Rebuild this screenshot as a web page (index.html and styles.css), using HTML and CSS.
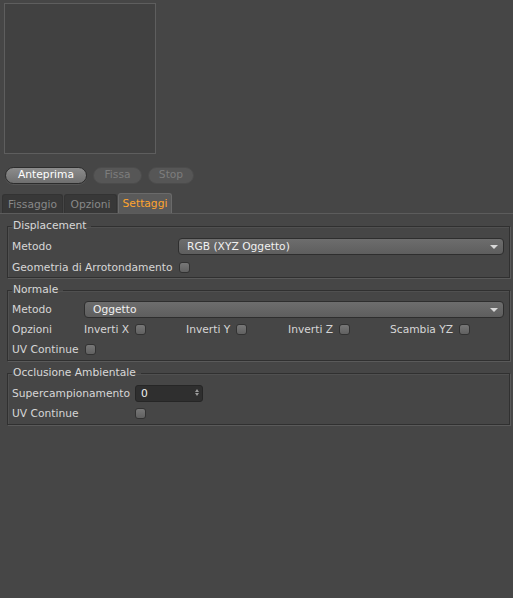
FILE: index.html
```html
<!DOCTYPE html>
<html>
<head>
<meta charset="utf-8">
<link rel="stylesheet" href="styles.css">
</head>
<body>
<div class="preview"></div>
<div class="buttons">
  <span class="btn btn-main">Anteprima</span>
  <span class="btn btn-off btn-fissa">Fissa</span>
  <span class="btn btn-off btn-stop">Stop</span>
</div>
<div class="tabs">
  <span class="tab tab-1">Fissaggio</span>
  <span class="tab tab-2">Opzioni</span>
  <span class="tab tab-3 active">Settaggi</span>
</div>
<div class="content">
  <fieldset class="group g1">
    <legend>Displacement</legend>
    <div class="row row-tall">
      <span class="label w1">Metodo</span>
      <span class="select">RGB (XYZ Oggetto)<i class="arrow"></i></span>
    </div>
    <div class="row">
      <span class="label">Geometria di Arrotondamento</span>
      <span class="check"></span>
    </div>
  </fieldset>
  <fieldset class="group g2">
    <legend>Normale</legend>
    <div class="row">
      <span class="label w2">Metodo</span>
      <span class="select">Oggetto<i class="arrow"></i></span>
    </div>
    <div class="row">
      <span class="label w2">Opzioni</span>
      <span class="opt"><span class="label">Inverti X</span><span class="check"></span></span>
      <span class="opt"><span class="label">Inverti Y</span><span class="check"></span></span>
      <span class="opt"><span class="label">Inverti Z</span><span class="check"></span></span>
      <span class="opt"><span class="label">Scambia YZ</span><span class="check"></span></span>
    </div>
    <div class="row">
      <span class="label">UV Continue</span>
      <span class="check"></span>
    </div>
  </fieldset>
  <fieldset class="group g3">
    <legend>Occlusione Ambientale</legend>
    <div class="row">
      <span class="label w3">Supercampionamento</span>
      <span class="num">0<i class="spin"><i class="up"></i><i class="down"></i></i></span>
    </div>
    <div class="row">
      <span class="label w3">UV Continue</span>
      <span class="check check-col"></span>
    </div>
  </fieldset>
</div>
</body>
</html>
```

FILE: styles.css
```css
html, body {
  margin: 0;
  padding: 0;
  background: #464646;
  width: 513px;
  height: 598px;
  overflow: hidden;
  font-family: "DejaVu Sans", "Liberation Sans", sans-serif;
  font-size: 10.7px;
  color: #d6d6d6;
}

.preview {
  margin: 3px 0 0 4px;
  width: 150px;
  height: 149px;
  border: 1px solid #5e5e5e;
  background: #414141;
}

.buttons {
  display: flex;
  gap: 6px;
  margin-top: 13px;
  padding-left: 5px;
}

.btn {
  box-sizing: border-box;
  height: 17px;
  border-radius: 9px;
  display: flex;
  align-items: center;
  justify-content: center;
  line-height: 1;
}

.btn-main {
  width: 82px;
  background: linear-gradient(#8c8c8c, #6f6f6f);
  border: 1px solid #2c2c2c;
  color: #ffffff;
  box-shadow: 0 1px 0 #555;
}

.btn-off {
  background: #565656;
  border: 1px solid #4c4c4c;
  color: #7d7d7d;
}

.btn-fissa { width: 49px; }
.btn-stop { width: 46px; }

.tabs {
  display: flex;
  align-items: flex-end;
  gap: 1px;
  margin-top: 9px;
  padding-left: 2px;
  height: 20px;
}

.tab {
  box-sizing: border-box;
  height: 19px;
  display: flex;
  align-items: center;
  justify-content: center;
  background: #383838;
  color: #888888;
  border-radius: 3px 3px 0 0;
  border: 1px solid #333;
  border-bottom: none;
}

.tab-1 { width: 61px; }
.tab-2 { width: 53px; }
.tab-3 { width: 54px; }

.tab.active {
  height: 20px;
  background: #5a5a5a;
  color: #ffa52e;
  border-color: #6a6a6a;
}

.content {
  border-top: 1px solid #5c5c5c;
  padding-top: 5px;
}

.group {
  margin: 0 3px 5px 7px;
  padding: 2px 5px 0 4px;
  border: 1px solid #303030;
  box-shadow: 1px 1px 0 #5a5a5a, inset 1px 1px 0 #505050;
  min-width: 0;
}

.group legend {
  padding: 0 5px 0 1px;
  line-height: 14px;
  color: #d8d8d8;
}

.g2 { padding-bottom: 1px; }
.g3 { padding-top: 3px; padding-bottom: 1px; }

.row {
  display: flex;
  align-items: center;
  height: 20px;
}

.row-tall { height: 22px; }

.label { white-space: nowrap; }
.w1 { width: 166px; flex: none; }
.w2 { width: 72px; flex: none; }
.w3 { width: 123px; flex: none; }

.opt {
  width: 102px;
  flex: none;
  display: flex;
  align-items: center;
}

.check {
  box-sizing: border-box;
  width: 11px;
  height: 11px;
  margin-left: 6px;
  border-radius: 3px;
  border: 1px solid #323232;
  background: linear-gradient(#777, #616161);
  flex: none;
}

.check-col { margin-left: 0; }

.select {
  position: relative;
  box-sizing: border-box;
  flex: 1;
  height: 17px;
  border: 1px solid #2e2e2e;
  border-radius: 4px;
  background: linear-gradient(#6d6d6d, #5e5e5e);
  color: #f0f0f0;
  padding-left: 8px;
  display: flex;
  align-items: center;
}

.arrow {
  position: absolute;
  right: 5px;
  top: 6px;
  width: 0;
  height: 0;
  border-left: 4px solid transparent;
  border-right: 4px solid transparent;
  border-top: 4px solid #d8d8d8;
}

.num {
  position: relative;
  box-sizing: border-box;
  width: 68px;
  height: 17px;
  border: 1px solid #262626;
  border-radius: 3px;
  background: #2f2f2f;
  color: #f0f0f0;
  padding-left: 5px;
  display: flex;
  align-items: center;
}

.spin {
  position: absolute;
  right: 3px;
  top: 3px;
  display: flex;
  flex-direction: column;
  gap: 1px;
}

.spin .up, .spin .down {
  display: block;
  width: 0;
  height: 0;
  border-left: 2.5px solid transparent;
  border-right: 2.5px solid transparent;
}

.spin .up { border-bottom: 3px solid #9a9a9a; }
.spin .down { border-top: 3px solid #9a9a9a; }
```
